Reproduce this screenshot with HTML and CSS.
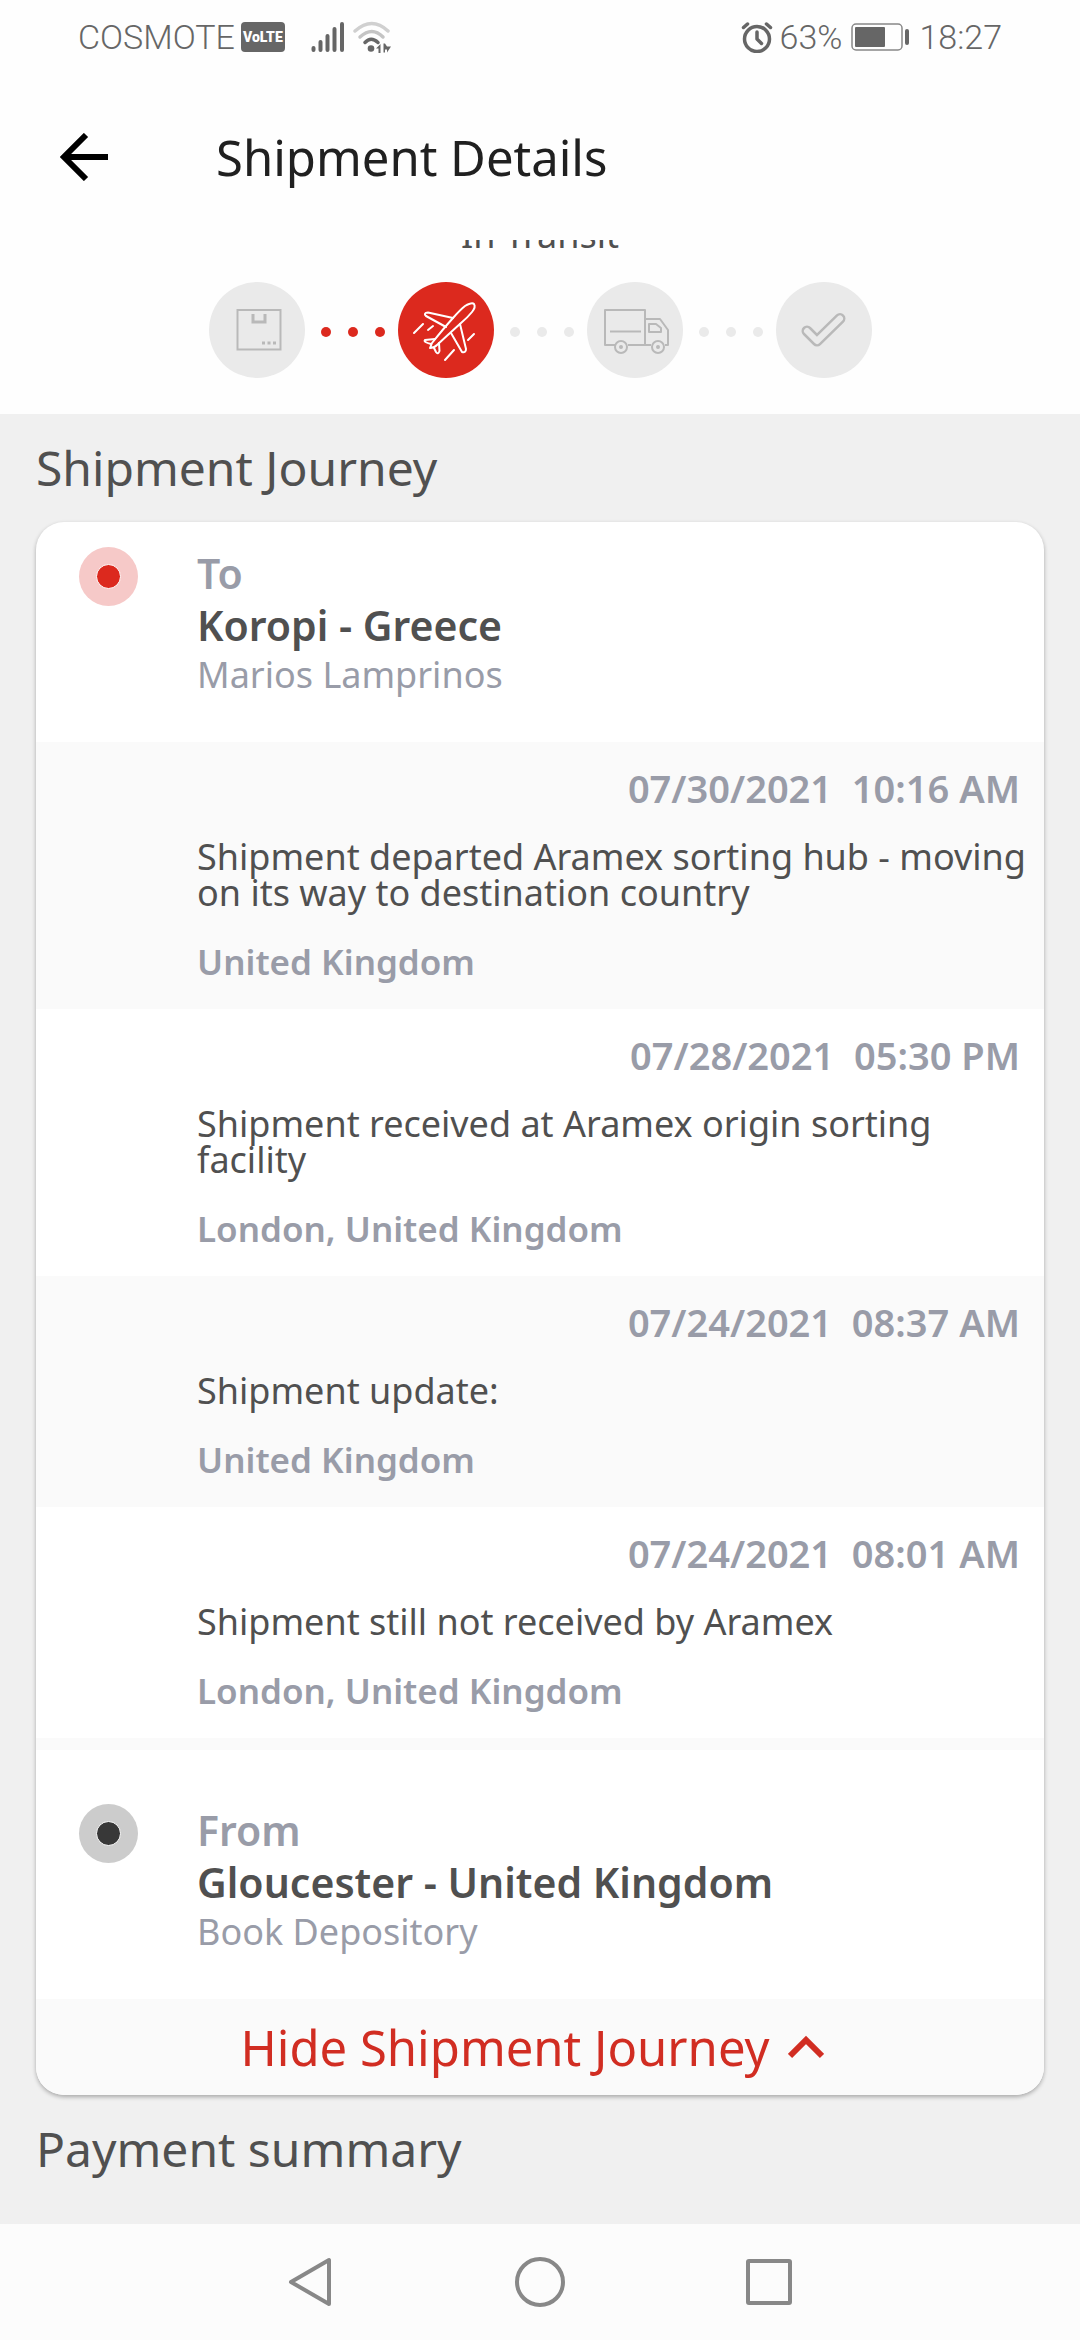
FILE: index.html
```html
<!DOCTYPE html>
<html lang="en">
  <head>
    <meta charset="UTF-8" />
    <meta name="viewport" content="width=device-width, initial-scale=1.0" />
    <title>Shipment Details</title>
    <link rel="stylesheet" href="styles.css">
  </head>
  <body>
    <header class="header">
      <div class="status-bar">
        <div class="status-left">
          <span>COSMOTE</span>
          <span class="volte">VoLTE</span>
          <svg class="signal" width="34" height="32" viewBox="0 0 34 32">
            <path d="M2.500 29v-2M9.500 29v-8M16.500 29v-14M23.500 29v-21M31 29v-26" stroke="#666" stroke-width="4" stroke-linecap="round" />
          </svg>
          <svg width="38" height="32" viewBox="0 0 38 32" fill="none" stroke-width="3.500" stroke-linecap="round">
            <path d="M2 10Q19-5 35 10" stroke="#d0d0d0" />
            <path d="M7 16Q19 5 30 16" stroke="#c4c4c4" />
            <path d="M12 21.500Q18 15 25 21.500" stroke="#666" />
            <circle cx="18" cy="27.500" r="3.300" fill="#666" />
            <path d="M23 27.500l4.500-4.500v9h-2v-4.500zM38 25.500l-4 6v-3h-2v3h-1.500v-9h1.500l2 3z" fill="#666" />
          </svg>
        </div>
        <div class="status-right">
          <svg width="32" height="32" viewBox="0 0 32 32" fill="none" stroke="#666" stroke-linecap="round" stroke-linejoin="round">
            <circle cx="16" cy="18" r="12.500" stroke-width="3.500" />
            <path d="M16 11v7l4.500 4.500" stroke-width="3.500" />
            <path d="M2.500 6.500l4-3.500M29.500 6.500l-4-3.500" stroke-width="3.500" />
          </svg>
          <span class="percent">63%</span>
          <svg class="battery" width="60" height="30" viewBox="0 0 60 30">
            <rect x="1" y="2" width="50" height="26" rx="4" fill="none" stroke="#888" stroke-width="1.500" />
            <rect x="4" y="5" width="30" height="20" rx="1" fill="#666" />
            <rect x="54" y="7" width="4" height="16" rx="2" fill="#666" />
          </svg>
          <span>18:27</span>
        </div>
      </div>
      <div class="app-bar">
        <button type="button" class="back" aria-label="Back">
          <svg width="48" height="48" viewBox="0 0 48 48" fill="none" stroke="#000" stroke-width="6">
            <path d="M26 2L4 24l22 22M4 24h44" />
          </svg>
        </button>
        <h1>Shipment Details</h1>
      </div>
    </header>

    <main>
      <section class="tracker">
        <p class="tracker-label">In Transit</p>
        <div class="steps">
          <svg class="step" viewBox="0 0 96 96" fill="none" stroke="#b9b9b9" stroke-width="2">
            <rect x="28.500" y="28" width="43" height="39.500" />
            <path d="M44 32v8h12v-8" stroke-width="3" />
            <path d="M53 61h3M58.500 61h3M64 61h3" stroke-width="3" />
          </svg>
          <div class="dots done"><i></i><i></i><i></i></div>
          <svg class="step active" viewBox="0 0 96 96" fill="none" stroke="#fff" stroke-width="2" stroke-linecap="round" stroke-linejoin="round">
            <path d="M32 66L34 61Q46 46 55 36Q62 28 67 24Q74 20 76 22Q78 25 74 30Q70 35 63 41L52 51L39 63Q36 66 32 66z" />
            <path d="M55 36L30 30.500Q25 31 28 34L48 45" />
            <path d="M62 42L68 67Q68 71 64 70L53 51" />
            <path d="M37 57L27 58Q25 60 33 62" />
            <path d="M41 61L41.500 69Q40 73 38 70L36 66" />
            <path d="M16 51l9-9M30 48l5-4M47 78l9-10M70 58l6-6" />
          </svg>
          <div class="dots"><i></i><i></i><i></i></div>
          <svg class="step" viewBox="0 0 96 96" fill="none" stroke="#b9b9b9" stroke-width="2" stroke-linejoin="round">
            <path d="M28 63H18V28H58V63H41M58 63H64M78 63H81V48L73 37H58M23 49.500H54M41 63H64" />
            <path d="M62 42h7l5 4v4H62z" />
            <circle cx="34" cy="65" r="6" />
            <circle cx="71" cy="65" r="6" />
            <circle cx="34" cy="65" r="1" />
            <circle cx="71" cy="65" r="1" />
          </svg>
          <div class="dots"><i></i><i></i><i></i></div>
          <svg class="step" viewBox="0 0 96 96" fill="none" stroke-linecap="round" stroke-linejoin="round">
            <path d="M31 49L41 59L64 36.500" stroke="#b9b9b9" stroke-width="11" />
            <path d="M31 49L41 59L64 36.500" stroke="#eaeaea" stroke-width="6" />
          </svg>
        </div>
      </section>

      <h2>Shipment Journey</h2>
      <section class="card">
        <div class="place">
          <div class="marker to"></div>
          <div>
            <p class="direction">To</p>
            <p class="city">Koropi - Greece</p>
            <p class="person">Marios Lamprinos</p>
          </div>
        </div>
        <div class="event">
          <time>07/30/2021&nbsp; 10:16 AM</time>
          <p>Shipment departed Aramex sorting hub - moving on its way to destination country</p>
          <p class="location">United Kingdom</p>
        </div>
        <div class="event">
          <time>07/28/2021&nbsp; 05:30 PM</time>
          <p>Shipment received at Aramex origin sorting facility</p>
          <p class="location">London, United Kingdom</p>
        </div>
        <div class="event">
          <time>07/24/2021&nbsp; 08:37 AM</time>
          <p>Shipment update:</p>
          <p class="location">United Kingdom</p>
        </div>
        <div class="event">
          <time>07/24/2021&nbsp; 08:01 AM</time>
          <p>Shipment still not received by Aramex</p>
          <p class="location">London, United Kingdom</p>
        </div>
        <div class="place origin">
          <div class="marker from"></div>
          <div>
            <p class="direction">From</p>
            <p class="city">Gloucester - United Kingdom</p>
            <p class="person">Book Depository</p>
          </div>
        </div>
        <button type="button" class="toggle">
          Hide Shipment Journey
          <svg width="36" height="24" viewBox="0 0 36 24" fill="none" stroke="#d12d22" stroke-width="6">
            <path d="M2 21L18 5l16 16" />
          </svg>
        </button>
      </section>
      <h2>Payment summary</h2>
    </main>

    <nav class="nav-bar">
      <button type="button" aria-label="Back">
        <svg width="52" height="52" viewBox="0 0 52 52"><path d="M44 4v44L6 26z" /></svg>
      </button>
      <button type="button" aria-label="Home">
        <svg width="52" height="52" viewBox="0 0 52 52"><circle cx="26" cy="26" r="23" /></svg>
      </button>
      <button type="button" aria-label="Recent apps">
        <svg width="52" height="52" viewBox="0 0 52 52"><rect x="5" y="5" width="42" height="42" rx="1" /></svg>
      </button>
    </nav>
  </body>
</html>
```
FILE: styles.css
```css
* {
  box-sizing: border-box;
}
body {
  margin: 0;
  min-height: 100vh;
  display: flex;
  flex-direction: column;
  background-color: #f0f0f0;
  color: #505050;
  font-family: "Noto Sans", sans-serif;
  font-size: 36px;
  line-height: 36px;
}
h1,
h2,
p {
  margin: 0;
}
svg {
  display: block;
  flex-shrink: 0;
}
button {
  padding: 0;
  border: none;
  background: none;
  font-family: inherit;
  cursor: pointer;
}

/* Header */
.header {
  background-color: #fefefe;
}
.status-bar {
  display: flex;
  justify-content: space-between;
  align-items: center;
  height: 74px;
  padding: 0 78px;
  color: #666666;
  font-family: Roboto, sans-serif;
  font-size: 34px;
  font-weight: 300;
}
.status-left,
.status-right {
  display: flex;
  align-items: center;
}
.volte {
  margin-left: 6px;
  width: 44px;
  border-radius: 4px;
  background-color: #666666;
  color: #ffffff;
  font-size: 14px;
  font-weight: 900;
  line-height: 30px;
  text-align: center;
}
.signal {
  margin: 0 8px 0 26px;
}
.percent {
  margin: 0 9px 0 7px;
}
.battery {
  margin-right: 8px;
}
.app-bar {
  display: flex;
  align-items: center;
  gap: 108px;
  height: 166px;
  padding: 0 60px;
}
h1 {
  color: #202020;
  font-size: 49px;
  font-weight: 400;
  line-height: 48px;
}

/* Progress tracker */
main {
  flex: 1;
}
.tracker {
  overflow: hidden;
  padding-bottom: 36px;
  background-color: #fefefe;
}
.tracker-label {
  margin: -23px 0 29px;
  text-align: center;
}
.steps {
  display: flex;
  justify-content: center;
  align-items: center;
}
.step {
  width: 96px;
  height: 96px;
  border-radius: 50%;
  background-color: #eaeaea;
}
.step.active {
  background-color: #dc291e;
}
.dots {
  display: flex;
  gap: 17px;
  padding: 4px 13px 0 16px;
}
.dots i {
  width: 10px;
  height: 10px;
  border-radius: 50%;
  background-color: #eaeaea;
}
.dots.done i {
  background-color: #dc291e;
}

/* Journey card */
h2 {
  padding: 0 36px;
  font-size: 48px;
  font-weight: 400;
  line-height: 108px;
}
.card {
  margin: 0 36px;
  border-radius: 28px;
  background-color: #ffffff;
  box-shadow: 0 2px 4px rgba(0, 0, 0, 0.3);
  overflow: hidden;
}
.place {
  display: flex;
  align-items: flex-start;
  gap: 59px;
  padding: 25px 24px 44px 43px;
}
.origin {
  border-top: 12px solid #fafafa;
  padding-top: 54px;
}
.marker {
  display: flex;
  align-items: center;
  justify-content: center;
  width: 59px;
  height: 59px;
  border-radius: 50%;
  background-color: #f6c9c8;
}
.marker::before {
  content: "";
  width: 23px;
  height: 23px;
  border: 1px solid #ffffff;
  border-radius: 50%;
  background-color: #dc291e;
}
.marker.from {
  background-color: #cccccc;
}
.marker.from::before {
  background-color: #383838;
}
.direction,
.city {
  font-size: 41px;
  font-weight: 600;
  line-height: 52px;
}
.direction,
.person,
.location,
time {
  color: #999ca8;
}
.person {
  line-height: 47px;
}
.event {
  display: flex;
  flex-direction: column;
  gap: 33px;
  padding: 28px 8px 29px 161px;
}
.event:nth-child(even) {
  background-color: #fafafa;
}
time {
  padding-right: 16px;
  text-align: right;
  font-size: 38px;
  font-weight: 600;
}
.location {
  font-size: 35px;
  font-weight: 600;
}
.toggle {
  display: flex;
  align-items: center;
  justify-content: center;
  gap: 18px;
  width: 100%;
  height: 96px;
  padding-right: 16px;
  background-color: #fafafa;
  color: #d12d22;
  font-size: 49px;
}

/* System navigation */
.nav-bar {
  display: flex;
  justify-content: center;
  align-items: center;
  gap: 177px;
  height: 116px;
  background-color: #fcfcfc;
}
.nav-bar svg {
  fill: none;
  stroke: #888888;
  stroke-width: 4;
  stroke-linejoin: round;
}
```
